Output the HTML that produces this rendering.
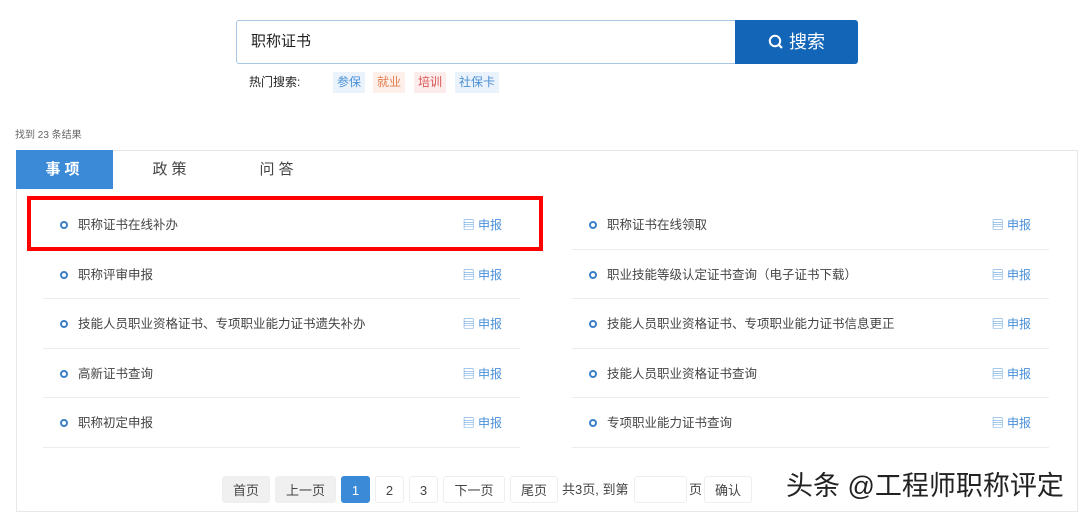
<!DOCTYPE html>
<html><head><meta charset="utf-8"><style>
*{margin:0;padding:0;box-sizing:border-box}
body{width:1080px;height:511px;background:#fff;font-family:"Liberation Sans","Noto Sans CJK SC",sans-serif;position:relative;overflow:hidden;color:#333}
.a{position:absolute}
.inp{left:236px;top:20px;width:500px;height:44px;border:1px solid #a9c6e3;border-right:none;border-radius:3px 0 0 3px;font-size:15px;line-height:42px;padding-left:14px;color:#222}
.btn{left:735px;top:20px;width:123px;height:44px;background:#1365b8;border-radius:0 3px 3px 0;color:#fff;font-size:18px;line-height:44px;text-align:center}
.hot{top:72px;font-size:12px;height:21px;line-height:21px;padding:0 4px}
.tabs{left:16px;top:150px;width:1062px;height:362px;border:1px solid #e8e8e8}
.tab{top:150px;height:39px;line-height:39px;font-size:15px;letter-spacing:4px;text-align:center;width:97px}
.row{position:relative;height:49.5px;border-bottom:1px solid #ececec;font-size:12.5px;line-height:50px;color:#444}
.row .d{position:absolute;left:17px;top:21px;width:8px;height:8px;border:2px solid #3a7fc8;border-radius:50%}
.row .t{position:absolute;left:35px}
.row .s{position:absolute;right:18px;color:#4a90d9;font-size:12px}
.pg{top:476px;height:27px;line-height:27px;font-size:13px;text-align:center;border:1px solid #eee;border-radius:3px;color:#444}
</style></head><body>
<div class="a inp">职称证书</div>
<div class="a btn"><svg width="16" height="16" viewBox="0 0 16 16" style="vertical-align:-2px"><circle cx="7" cy="7" r="5.2" fill="none" stroke="#fff" stroke-width="2"/><path d="M10.5 10.5L14 14" stroke="#fff" stroke-width="2.2"/></svg> 搜索</div>
<div class="a" style="left:249px;top:72px;font-size:12px;line-height:21px;color:#222">热门搜索:</div>
<div class="a hot" style="left:333px;background:#eaf2fb;color:#4a8fd6">参保</div>
<div class="a hot" style="left:373px;background:#fdf0ea;color:#e57c4f">就业</div>
<div class="a hot" style="left:414px;background:#fdecec;color:#d9534f">培训</div>
<div class="a hot" style="left:455px;background:#eaf2fb;color:#4a8fd6">社保卡</div>
<div class="a" style="left:15px;top:126px;font-size:10px;color:#666">找到 23 条结果</div>
<div class="a tabs"></div>
<div class="a tab" style="left:16px;background:#3a8ad8;color:#fff;font-weight:bold">事项</div>
<div class="a tab" style="left:123px;color:#444">政策</div>
<div class="a tab" style="left:230px;color:#444">问答</div>
<div class="a" style="left:43px;top:200px;width:477px">
<div class="row"><span class="d"></span><span class="t">职称证书在线补办</span><span class="s">▤ 申报</span></div>
<div class="row"><span class="d"></span><span class="t">职称评审申报</span><span class="s">▤ 申报</span></div>
<div class="row"><span class="d"></span><span class="t">技能人员职业资格证书、专项职业能力证书遗失补办</span><span class="s">▤ 申报</span></div>
<div class="row"><span class="d"></span><span class="t">高新证书查询</span><span class="s">▤ 申报</span></div>
<div class="row"><span class="d"></span><span class="t">职称初定申报</span><span class="s">▤ 申报</span></div>
</div>
<div class="a" style="left:572px;top:200px;width:477px">
<div class="row"><span class="d"></span><span class="t">职称证书在线领取</span><span class="s">▤ 申报</span></div>
<div class="row"><span class="d"></span><span class="t">职业技能等级认定证书查询（电子证书下载）</span><span class="s">▤ 申报</span></div>
<div class="row"><span class="d"></span><span class="t">技能人员职业资格证书、专项职业能力证书信息更正</span><span class="s">▤ 申报</span></div>
<div class="row"><span class="d"></span><span class="t">技能人员职业资格证书查询</span><span class="s">▤ 申报</span></div>
<div class="row"><span class="d"></span><span class="t">专项职业能力证书查询</span><span class="s">▤ 申报</span></div>
</div>
<div class="a" style="left:27px;top:196px;width:516px;height:55px;border:4px solid #f00"></div>
<div class="a pg" style="left:222px;width:48px;background:#f0f0f0">首页</div>
<div class="a pg" style="left:275px;width:61px;background:#f0f0f0">上一页</div>
<div class="a pg" style="left:341px;width:29px;background:#3a8ad8;color:#fff;border-color:#3a8ad8">1</div>
<div class="a pg" style="left:375px;width:29px">2</div>
<div class="a pg" style="left:409px;width:29px">3</div>
<div class="a pg" style="left:443px;width:62px">下一页</div>
<div class="a pg" style="left:510px;width:48px">尾页</div>
<div class="a" style="left:562px;top:476px;line-height:27px;font-size:13px;color:#444">共3页, 到第</div>
<div class="a pg" style="left:634px;width:53px"></div>
<div class="a" style="left:689px;top:476px;line-height:27px;font-size:13px;color:#444">页</div>
<div class="a pg" style="left:704px;width:48px">确认</div>
<div class="a" style="left:786px;top:464px;font-size:27px;color:#222;white-space:nowrap">头条 @工程师职称评定</div>
</body></html>
